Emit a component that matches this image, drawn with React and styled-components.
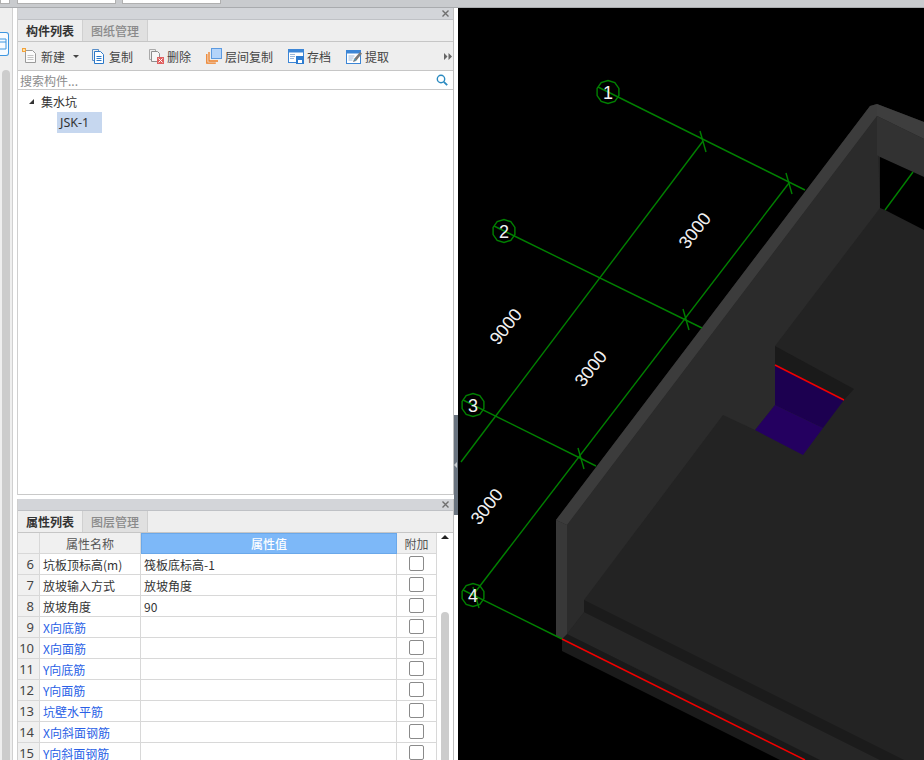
import React from 'react';
import styled, { createGlobalStyle } from 'styled-components';

const GlobalStyle = createGlobalStyle`
  html, body { margin: 0; padding: 0; height: 100%; background: #fff; overflow: hidden; }
  body { font-family: "Noto Sans CJK SC", "Noto Sans", sans-serif; font-size: 12px; color: #333; }
`;

const Page = styled.div`
  width: 924px;
  height: 760px;
  display: flex;
  flex-direction: column;
  overflow: hidden;
`;
const TopStrip = styled.div`
  height: 8px;
  flex: none;
  background: #c9cbce;
  border-bottom: 1px solid #a9abae;
  box-sizing: border-box;
  display: flex;
  gap: 6px;
`;
const TopTab = styled.div`
  width: ${(p) => p.$w}px;
  margin-left: ${(p) => p.$ml || 0}px;
  height: 4px;
  background: #fff;
  border: 1px solid #b0b0b0;
  border-top: 0;
  box-sizing: border-box;
`;
const Body = styled.div`
  flex: 1;
  display: flex;
  min-height: 0;
`;
const LeftRail = styled.div`
  width: 17px;
  flex: none;
  background: #fff;
  display: flex;
  flex-direction: column;
`;
const RailInner = styled.div`
  width: 12px;
  height: 100%;
  background: #efefef;
  border-right: 1px solid #d0d0d0;
  display: flex;
  flex-direction: column;
  overflow: hidden;
`;
const RailIcon = styled.div`
  width: 8px;
  height: 22px;
  margin-top: 24px;
  border: 1px solid #3d96e0;
  border-left: 0;
  border-radius: 0 3px 3px 0;
  background: #f7fbff;
  display: flex;
  align-items: center;
`;
const RailThumb = styled.div`
  width: 8px;
  flex: 1;
  margin: 14px 0 0 2px;
  background: #cccccc;
  border-radius: 4px 4px 0 0;
`;
const Panels = styled.div`
  width: 437px;
  flex: none;
  display: flex;
  flex-direction: column;
  gap: 4px;
`;
const Panel = styled.section`
  display: flex;
  flex-direction: column;
  background: #fff;
  border-right: 1px solid #bfbfbf;
  border-left: 1px solid #cfcfcf;
  box-sizing: border-box;
  height: ${(p) => p.$h}px;
  flex: none;
  overflow: hidden;
`;
const TitleBar = styled.div`
  height: 12px;
  flex: none;
  box-sizing: border-box;
  background: #d3d5d9;
  border-bottom: 1px solid #bfc1c5;
  display: flex;
  align-items: center;
  justify-content: flex-end;
  padding-right: 4px;
  color: #666;
`;
const TabRow = styled.div`
  height: 22px;
  flex: none;
  box-sizing: border-box;
  display: flex;
  background: #eeeeee;
  border-bottom: 1px solid #c6c6c6;
`;
const Tab = styled.div`
  width: 64px;
  text-align: center;
  line-height: 21px;
  font-size: 12px;
  font-weight: ${(p) => (p.$active ? 700 : 500)};
  color: ${(p) => (p.$active ? '#333' : '#8a8a8a')};
  background: ${(p) => (p.$active ? '#eeeeee' : '#e0e0e0')};
  border-right: 1px solid ${(p) => (p.$active ? '#d0d0d0' : '#cfcfcf')};
`;
const Toolbar = styled.div`
  height: 29px;
  flex: none;
  box-sizing: border-box;
  background: #eeeeee;
  border-bottom: 1px solid #c6c6c6;
  display: flex;
  align-items: center;
  padding-left: 4px;
  gap: 15px;
`;
const ToolButton = styled.div`
  display: flex;
  align-items: center;
  gap: 3px;
  color: #444;
`;
const Caret = styled.span`
  width: 0;
  height: 0;
  margin-left: 5px;
  margin-right: -4px;
  border-left: 3px solid transparent;
  border-right: 3px solid transparent;
  border-top: 3px solid #444;
`;
const MoreArrows = styled.div`
  margin-left: auto;
  margin-right: 1px;
  display: flex;
`;
const SearchBar = styled.div`
  height: 19px;
  flex: none;
  box-sizing: border-box;
  display: flex;
  align-items: center;
  justify-content: space-between;
  padding: 0 5px 0 2px;
  color: #8c8c8c;
  border-bottom: 1px solid #c9c9c9;
`;
const Tree = styled.div`
  flex: 1;
  padding-top: 1px;
  border-bottom: 1px solid #c9c9c9;
`;
const TreeParent = styled.div`
  height: 21px;
  display: flex;
  align-items: center;
  padding-left: 11px;
  gap: 7px;
  color: #333;
`;
const Expander = styled.span`
  width: 0;
  height: 0;
  border-left: 5px solid transparent;
  border-bottom: 5px solid #333;
`;
const TreeLeaf = styled.div`
  margin-left: 39px;
  width: 45px;
  height: 21px;
  line-height: 21px;
  padding-left: 3px;
  box-sizing: border-box;
  background: #c6d7ef;
  font-family: "Noto Sans", sans-serif;
  font-size: 12.5px;
  color: #333;
`;
const TableWrap = styled.div`
  flex: 1;
  display: flex;
  min-height: 0;
`;
const Table = styled.div`
  width: 419px;
  flex: none;
  display: grid;
  grid-template-columns: 22px 101px 256px 40px;
  grid-auto-rows: 21px;
`;
const Cell = styled.div`
  display: flex;
  align-items: center;
  box-sizing: border-box;
  padding-left: 3px;
  border-right: 1px solid #d8d8d8;
  border-bottom: 1px solid #d8d8d8;
  color: #333;
  white-space: nowrap;
`;
const HeadCell = styled(Cell)`
  justify-content: center;
  padding: 0;
  background: ${(p) => (p.$primary ? '#7db8f8' : '#f0f0f0')};
  color: ${(p) => (p.$primary ? '#fff' : '#555')};
  ${(p) => p.$primary && 'border: 1px solid #6aa8ea; font-weight: 500;'}
`;
const NumCell = styled(Cell)`
  justify-content: flex-end;
  padding: 0 5px 0 0;
  background: #f0f0f0;
  color: #444;
  font-family: "Noto Sans", sans-serif;
  font-size: 13px;
`;
const NameCell = styled(Cell)`
  color: ${(p) => (p.$link ? '#2a5fe6' : '#333')};
`;
const CheckCell = styled(Cell)`
  justify-content: center;
  padding: 0 1px 2px 0;
`;
const Check = styled.span`
  width: 13px;
  height: 13px;
  border: 1px solid #8a8a8a;
  border-radius: 2px;
  background: #fff;
`;
const ScrollColumn = styled.div`
  flex: 1;
  display: flex;
  flex-direction: column;
  align-items: center;
  padding-top: 2px;
`;
const ArrowUp = styled.span`
  width: 0;
  height: 0;
  border-left: 4px solid transparent;
  border-right: 4px solid transparent;
  border-bottom: 4px solid #222;
`;
const ScrollThumb = styled.div`
  width: 8px;
  flex: 1;
  margin-top: 73px;
  background: #cccccc;
  border-radius: 4px 4px 0 0;
`;
const Splitter = styled.div`
  width: 4px;
  flex: none;
  background: #fff;
  padding-top: 407px;
  box-sizing: border-box;
`;
const SplitHandle = styled.div`
  height: 100px;
  background: #6a7480;
  display: flex;
  align-items: center;
`;
const SplitArrow = styled.span`
  width: 0;
  height: 0;
  border-top: 3px solid transparent;
  border-bottom: 3px solid transparent;
  border-right: 3px solid #c8ccd0;
`;
const Canvas = styled.div`
  flex: 1;
  background: #000;
  overflow: hidden;
`;
const Drawing = styled.svg`
  display: block;
  width: 466px;
  height: 752px;
`;
const DimText = styled.text`
  font-family: "Liberation Sans", sans-serif;
  font-size: 18px;
  fill: #f2f2f2;
  text-anchor: middle;
`;

const NewIcon = () => (
  <svg width="16" height="16" viewBox="0 0 16 16">
    <path d="M3.5 2.5h7l3 3v9h-10z" fill="#fbfbfb" stroke="#9a9a9a" />
    <path d="M5.5 7.5h6M5.5 9.5h6M5.5 11.5h6" stroke="#c4c4c4" />
    <rect x="0" y="0" width="4" height="4" fill="#f2a23c" />
    <rect x="1" y="1" width="2" height="2" fill="#fde3a8" />
  </svg>
);
const CopyIcon = () => (
  <svg width="16" height="16" viewBox="0 0 16 16">
    <path d="M2.5 1.5h6v2" fill="none" stroke="#5a8fc8" />
    <path d="M2.5 1.5v11h2" fill="none" stroke="#5a8fc8" />
    <path d="M4.5 3.5h6l3 3v9h-9z" fill="#fff" stroke="#2b78c8" />
    <path d="M6.5 8.5h5M6.5 10.5h5M6.5 12.5h5" stroke="#2b78c8" />
  </svg>
);
const DeleteIcon = () => (
  <svg width="16" height="16" viewBox="0 0 16 16">
    <path d="M1.5 1.5h6v2M1.5 1.5v10h2" fill="none" stroke="#aaa" />
    <path d="M3.5 3.5h6l2 2v8h-8z" fill="#f6f6f6" stroke="#8e8e8e" />
    <rect x="9" y="9" width="7" height="7" fill="#e06060" />
    <path d="M10.5 10.5l4 4M14.5 10.5l-4 4" stroke="#fff" />
  </svg>
);
const LayerIcon = () => (
  <svg width="16" height="16" viewBox="0 0 16 16">
    <path d="M0.8 6v9.2h9M3 4v9h9" fill="none" stroke="#ee7d22" strokeWidth="1.3" />
    <rect x="5.5" y="0.5" width="10" height="10" fill="#b4d4fa" stroke="#5c9ae0" />
  </svg>
);
const SaveIcon = () => (
  <svg width="16" height="16" viewBox="0 0 16 16">
    <rect x="0.5" y="1.5" width="15" height="13" fill="#fff" stroke="#3c86d6" />
    <rect x="0.5" y="1.5" width="15" height="3" fill="#3c86d6" />
    <path d="M2 6.5h5M2 8.5h5M2 10.5h4" stroke="#9cb8d8" />
    <rect x="8" y="8" width="8" height="8" fill="#2e7cd0" />
    <rect x="10" y="12" width="4" height="3" fill="#fff" />
  </svg>
);
const ExtractIcon = () => (
  <svg width="16" height="16" viewBox="0 0 16 16">
    <rect x="0.5" y="2.5" width="14" height="13" fill="#fff" stroke="#3c86d6" />
    <rect x="0.5" y="2.5" width="14" height="3" fill="#3c86d6" />
    <path d="M2.5 8h6M2.5 10h5M2.5 12h4" stroke="#9cb8d8" />
    <path d="M7 14l1-3 6-7 2 1.5-6 7.500z" fill="#7a7a7a" />
    <path d="M8 11l2 1.500" stroke="#3bb0d8" />
  </svg>
);
const SearchIcon = () => (
  <svg width="12" height="12" viewBox="0 0 12 12">
    <circle cx="5" cy="5" r="3.7" fill="none" stroke="#2a8ac0" strokeWidth="1.4" />
    <path d="M7.8 7.8l3.4 3.4" stroke="#2a8ac0" strokeWidth="1.8" />
  </svg>
);
const CloseIcon = () => (
  <svg width="7" height="7" viewBox="0 0 7 7">
    <path d="M0.5 0.5l6 6M6.5 0.5l-6 6" stroke="#6f6f6f" strokeWidth="1.4" />
  </svg>
);
const Chevrons = () => (
  <svg width="8" height="7" viewBox="0 0 8 7">
    <path d="M0 0l3.5 3.5L0 7zM4.5 0L8 3.5 4.5 7z" fill="#666" />
  </svg>
);
const CalendarGlyph = () => (
  <svg width="8" height="12" viewBox="0 0 8 12">
    <path d="M0 1h6v10H0M0 4h6" fill="none" stroke="#3d96e0" />
  </svg>
);

const tools = [
  { label: '复制', icon: <CopyIcon /> },
  { label: '删除', icon: <DeleteIcon /> },
  { label: '层间复制', icon: <LayerIcon /> },
  { label: '存档', icon: <SaveIcon /> },
  { label: '提取', icon: <ExtractIcon /> },
];

const rows = [
  { no: 6, name: '坑板顶标高(m)', value: '筏板底标高-1' },
  { no: 7, name: '放坡输入方式', value: '放坡角度' },
  { no: 8, name: '放坡角度', value: '90' },
  { no: 9, name: 'X向底筋', link: true },
  { no: 10, name: 'X向面筋', link: true },
  { no: 11, name: 'Y向底筋', link: true },
  { no: 12, name: 'Y向面筋', link: true },
  { no: 13, name: '坑壁水平筋', link: true },
  { no: 14, name: 'X向斜面钢筋', link: true },
  { no: 15, name: 'Y向斜面钢筋', link: true },
];

const GREEN = '#008000';

// 轴号圈是十边形
const ringPoints = (cx, cy, r = 11.5) =>
  Array.from({ length: 10 }, (_, i) => {
    const a = (i * Math.PI) / 5 + Math.PI / 10;
    return `${(cx + r * Math.cos(a)).toFixed(1)},${(cy + r * Math.sin(a)).toFixed(1)}`;
  }).join(' ');

const axes = [
  { n: 1, x: 608, y: 92, end: [805, 190] },
  { n: 2, x: 504, y: 231, end: [702, 328] },
  { n: 3, x: 473, y: 405, end: [596, 466] },
  { n: 4, x: 473, y: 595, end: [562, 639] },
];
const ticks = [
  [703, 141],
  [789, 183],
  [686, 319],
  [581, 458],
  [476, 597],
];
const dims = [
  { t: '3000', x: 694, y: 237 },
  { t: '3000', x: 590, y: 375 },
  { t: '3000', x: 486, y: 513 },
  { t: '9000', x: 505, y: 333 },
];

function Scene() {
  return (
    <Drawing viewBox="458 8 466 752">
      {/* 底板和楼面 */}
      <polygon points="556,520 870,106 877,104 924,122 924,760 805,760 562,639" fill="#232323" />
      <polygon points="562,639 805,760 780,760 562,651" fill="#1b1b1b" />
      <polygon points="567,634 584,612 924,782 924,812" fill="#262626" />
      <polygon points="567,634 924,812 924,820 562,639" fill="#191919" />
      <polygon points="584,600 924,770 924,782 584,612" fill="#1b1b1b" />
      {/* 内墙面 */}
      <polygon
        points="567,525 877,116 880,208 775,346 775,405 755,430 723,415 584,600 584,612 567,634"
        fill="#2b2b2b"
      />
      {/* 外墙顶和外墙面 */}
      <polygon points="556,520 870,106 877,104 877,116 567,525" fill="#3c3c3c" />
      <polygon points="556,520 567,525 567,634 562,639 556,636" fill="#383838" />
      <polygon points="877,104 924,122 924,139 877,116" fill="#3e3e3e" />
      <polygon points="877,116 924,139 924,177 880,157 877,155" fill="#323232" />
      <polygon points="880,157 924,177 924,230 885,210 880,208" fill="#000" />
      <line x1="885" y1="210" x2="913" y2="172" stroke={GREEN} strokeWidth="1.4" />
      {/* 集水坑 */}
      <polygon points="775,346 854,389 844,400 775,365" fill="#1a1a1a" />
      <polygon points="775,365 844,400 823,428 775,405" fill="#1c0050" />
      <polygon points="775,405 823,428 803,455 755,430" fill="#240060" />
      <line x1="775" y1="365" x2="844" y2="400" stroke="#f00000" strokeWidth="1.5" />
      <line x1="562" y1="639" x2="805" y2="760" stroke="#f00000" strokeWidth="1.5" />
      {/* 轴网 */}
      <g stroke={GREEN} strokeWidth="1.4" fill="none">
        <line x1="473" y1="595" x2="789" y2="183" />
        <line x1="461" y1="462" x2="703" y2="141" />
        {axes.map((a) => (
          <g key={a.n}>
            <line x1={a.x - 10} y1={a.y - 5} x2={a.end[0]} y2={a.end[1]} />
            <polygon points={ringPoints(a.x, a.y)} />
          </g>
        ))}
        {ticks.map(([x, y]) => (
          <line key={x} x1={x - 3} y1={y - 10} x2={x + 3} y2={y + 11} />
        ))}
      </g>
      {axes.map((a) => (
        <DimText key={a.n} x={a.x} y={a.y + 6.5}>
          {a.n}
        </DimText>
      ))}
      {dims.map((d) => (
        <DimText key={d.x} x={d.x} y={d.y} transform={`rotate(-52 ${d.x} ${d.y - 7})`}>
          {d.t}
        </DimText>
      ))}
    </Drawing>
  );
}

export default function App() {
  return (
    <Page>
      <GlobalStyle />
      <TopStrip>
        <TopTab $w={10} />
        <TopTab $w={99} $ml={1} />
        <TopTab $w={99} />
      </TopStrip>
      <Body>
        <LeftRail>
          <RailInner>
            <RailIcon>
              <CalendarGlyph />
            </RailIcon>
            <RailThumb />
          </RailInner>
        </LeftRail>
        <Panels>
          <Panel $h={487}>
            <TitleBar>
              <CloseIcon />
            </TitleBar>
            <TabRow>
              <Tab $active>构件列表</Tab>
              <Tab>图纸管理</Tab>
            </TabRow>
            <Toolbar>
              <ToolButton>
                <NewIcon />
                新建
                <Caret />
              </ToolButton>
              {tools.map((t) => (
                <ToolButton key={t.label}>
                  {t.icon}
                  {t.label}
                </ToolButton>
              ))}
              <MoreArrows>
                <Chevrons />
              </MoreArrows>
            </Toolbar>
            <SearchBar>
              搜索构件...
              <SearchIcon />
            </SearchBar>
            <Tree>
              <TreeParent>
                <Expander />
                集水坑
              </TreeParent>
              <TreeLeaf>JSK-1</TreeLeaf>
            </Tree>
          </Panel>
          <Panel $h={261}>
            <TitleBar>
              <CloseIcon />
            </TitleBar>
            <TabRow>
              <Tab $active>属性列表</Tab>
              <Tab>图层管理</Tab>
            </TabRow>
            <TableWrap>
              <Table>
                <HeadCell />
                <HeadCell>属性名称</HeadCell>
                <HeadCell $primary>属性值</HeadCell>
                <HeadCell>附加</HeadCell>
                {rows.map((r) => (
                  <React.Fragment key={r.no}>
                    <NumCell>{r.no}</NumCell>
                    <NameCell $link={r.link}>{r.name}</NameCell>
                    <Cell>{r.value}</Cell>
                    <CheckCell>
                      <Check />
                    </CheckCell>
                  </React.Fragment>
                ))}
              </Table>
              <ScrollColumn>
                <ArrowUp />
                <ScrollThumb />
              </ScrollColumn>
            </TableWrap>
          </Panel>
        </Panels>
        <Splitter>
          <SplitHandle>
            <SplitArrow />
          </SplitHandle>
        </Splitter>
        <Canvas>
          <Scene />
        </Canvas>
      </Body>
    </Page>
  );
}
